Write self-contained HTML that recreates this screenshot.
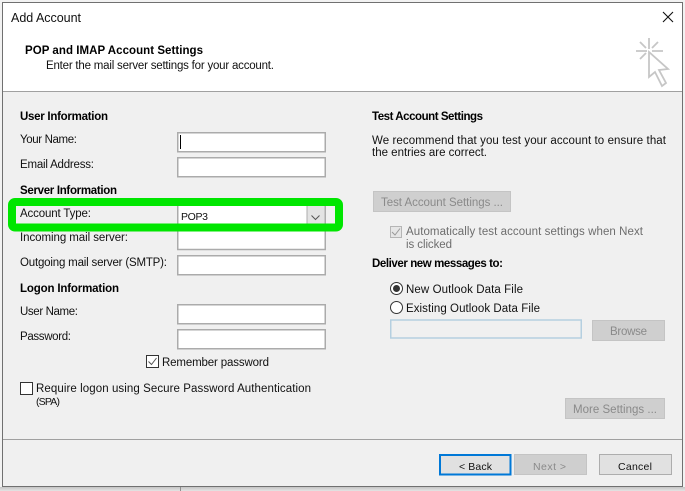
<!DOCTYPE html>
<html><head><meta charset="utf-8"><style>
html,body{margin:0;padding:0;width:685px;height:491px;overflow:hidden;background:#fff}
svg{display:block}
text{font-family:"Liberation Sans",sans-serif;font-size:11.5px;fill:#111}
.b{font-weight:bold;fill:#000}
.d{fill:#8a8a8a}
.s{font-size:10.5px}
.i{fill:#fff;stroke:#ababab;stroke-width:1.5}
.g{fill:#cfcfcf;stroke:#c4c4c4}
</style></head><body>
<svg width="685" height="491" viewBox="0 0 685 491" xmlns="http://www.w3.org/2000/svg">
<defs><linearGradient id="s" x1="0" y1="0" x2="0" y2="1"><stop offset="0" stop-color="#c4c4c4"/><stop offset="1" stop-color="#e4e4e4"/></linearGradient></defs>
<rect width="685" height="491" fill="#f2f2f2"/>
<rect x="0" y="487" width="685" height="4" fill="url(#s)"/>
<rect x="180" y="487" width="1" height="4" fill="#8f8f8f"/>
<rect x="2.500" y="2.500" width="680" height="484" fill="#f0f0f0" stroke="#707070"/>
<rect x="3" y="3" width="679" height="88" fill="#fff"/>
<rect x="3" y="91" width="679" height="1" fill="#a0a0a0"/>
<rect x="3" y="439" width="679" height="1" fill="#a0a0a0"/>

<path d="M663 12l10 10M673 12l-10 10" stroke="#111" stroke-width="1.1" fill="none"/>
<g fill="none" stroke="#c6c6c6" stroke-width="1.800">
<path d="M649 38v11M636 51h11M652 51h11M640 42l6 6M658 42l-6 6M640 59l6-6"/>
<path d="M649 52v25l6-5 7 14 4-3-7-13 9-1z" fill="#fff"/>
</g>

<text x="11" y="22" style="font-size:12.500px" textLength="70">Add Account</text>
<text class="b" x="25" y="54" textLength="178">POP and IMAP Account Settings</text>
<text x="46" y="69" textLength="228">Enter the mail server settings for your account.</text>

<text class="b" x="20" y="120" textLength="88">User Information</text>
<text x="20" y="143" textLength="57">Your Name:</text>
<text x="20" y="168" textLength="74">Email Address:</text>
<text class="b" x="20" y="194" textLength="97">Server Information</text>
<text x="20" y="241" textLength="108">Incoming mail server:</text>
<text x="20" y="266" textLength="147">Outgoing mail server (SMTP):</text>
<text class="b" x="20" y="292" textLength="99">Logon Information</text>
<text x="20" y="315" textLength="58">User Name:</text>
<text x="20" y="340" textLength="51">Password:</text>

<rect class="i" x="177.750" y="132.750" width="147.500" height="19"/>
<rect x="180" y="135" width="1" height="14" fill="#000"/>
<rect class="i" x="177.750" y="157.750" width="147.500" height="19"/>
<rect class="i" x="177.750" y="225" width="147.500" height="24.500"/>
<rect class="i" x="177.750" y="255.750" width="147.500" height="19"/>
<rect class="i" x="177.750" y="304.750" width="147.500" height="19"/>
<rect class="i" x="177.750" y="329.750" width="147.500" height="19"/>

<rect x="177.750" y="200" width="147.500" height="26" fill="#fff" stroke="#ababab" stroke-width="1.500"/>
<rect x="307" y="204" width="18" height="21" fill="#e3e3e3" stroke="#adadad"/>
<path d="M311.500 215.500l4 4 4-4" fill="none" stroke="#555" stroke-width="1"/>
<rect x="12" y="202" width="327" height="25.500" rx="3" fill="none" stroke="#00e600" stroke-width="8"/>
<rect x="16" y="206" width="160" height="17" fill="#f0f0f0"/>
<rect x="326" y="206" width="9" height="17" fill="#f0f0f0"/>
<text x="20" y="217" textLength="71">Account Type:</text>
<text class="s" x="181" y="220" textLength="27">POP3</text>

<rect x="146.500" y="355.500" width="12" height="12" fill="#fff" stroke="#333"/>
<path d="M148.500 361.500l3 3 5-6.500" fill="none" stroke="#555" stroke-width="1"/>
<text x="162" y="366" textLength="107">Remember password</text>
<rect x="20.500" y="382.500" width="12" height="12" fill="#fff" stroke="#333"/>
<text x="36" y="392" textLength="275">Require logon using Secure Password Authentication</text>
<text class="s" x="36" y="405" textLength="24">(SPA)</text>

<text class="b" x="372" y="120" textLength="111">Test Account Settings</text>
<text x="372" y="144" textLength="294">We recommend that you test your account to ensure that</text>
<text x="372" y="156" textLength="115">the entries are correct.</text>

<rect class="g" x="373.500" y="191.500" width="137" height="20"/>
<text class="d" x="381" y="206" textLength="122">Test Account Settings ...</text>
<rect x="390.500" y="226.500" width="11" height="11" fill="#e6e6e6" stroke="#b5b5b5"/>
<path d="M392 232l3 3 5-6.500" fill="none" stroke="#9a9a9a" stroke-width="1"/>
<text class="d" x="406" y="235" textLength="237" style="fill:#6d6d6d">Automatically test account settings when Next</text>
<text class="d" x="406" y="248" textLength="46" style="fill:#6d6d6d">is clicked</text>
<text class="b" x="372" y="267" textLength="131">Deliver new messages to:</text>

<circle cx="396.500" cy="288.500" r="6" fill="#fff" stroke="#333"/>
<circle cx="396.500" cy="288.500" r="3.500" fill="#333"/>
<text x="406" y="293" textLength="117">New Outlook Data File</text>
<circle cx="396.500" cy="307.500" r="6" fill="#fff" stroke="#333"/>
<text x="406" y="312" textLength="134">Existing Outlook Data File</text>
<rect x="390.750" y="320" width="190.500" height="18" fill="#f0f0f0" stroke="#b5cfe0" stroke-width="1.500"/>
<rect class="g" x="592.500" y="320.500" width="72" height="20"/>
<text class="d" x="610" y="335" textLength="37">Browse</text>

<rect class="g" x="565.500" y="398.500" width="99" height="20"/>
<text class="d" x="573" y="413" textLength="84">More Settings ...</text>

<rect x="440" y="455" width="70.500" height="19.500" fill="#e1e1e1" stroke="#0078d7" stroke-width="2"/>
<text class="s" x="459" y="470" textLength="33">&lt; Back</text>
<rect class="g" x="514.500" y="454.500" width="72" height="20"/>
<text class="d s" x="533" y="470" textLength="33">Next &gt;</text>
<rect x="599.500" y="454.500" width="72" height="20" fill="#e1e1e1" stroke="#adadad"/>
<text class="s" x="618" y="470" textLength="34">Cancel</text>
</svg>
</body></html>
